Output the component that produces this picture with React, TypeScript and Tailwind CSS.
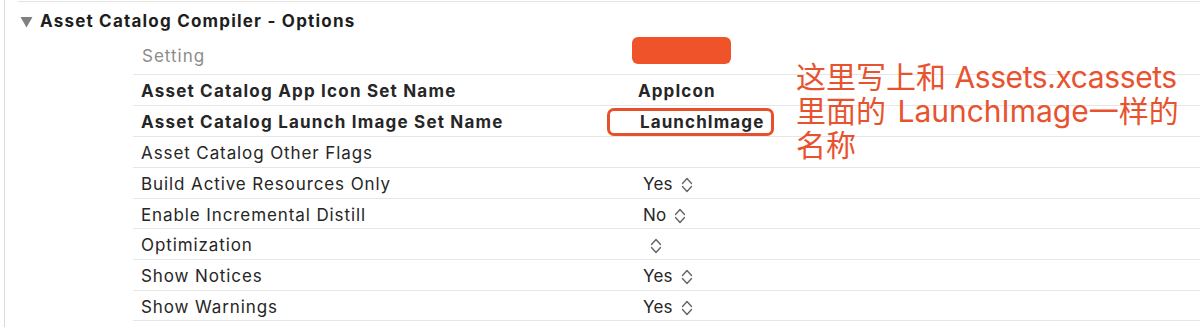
import React from "react";

const Chevrons = () => (
  <svg width="12" height="18" viewBox="0 0 12 18" className="shrink-0">
    <path d="M1.5 7.5 L6 2.5 L10.5 7.5" fill="none" stroke="#666666" strokeWidth="1.4" strokeLinecap="round" strokeLinejoin="round" />
    <path d="M1.5 10.5 L6 15.5 L10.5 10.5" fill="none" stroke="#666666" strokeWidth="1.4" strokeLinecap="round" strokeLinejoin="round" />
  </svg>
);

type Row = { label: string; value?: string; bold?: boolean; chevron?: boolean; h: string; valuePad?: string };

const rows: Row[] = [
  { label: "Asset Catalog App Icon Set Name", value: "AppIcon", bold: true, h: "h-[31px]", valuePad: "pl-[505px]" },
  { label: "Asset Catalog Launch Image Set Name", value: "LaunchImage", bold: true, h: "h-[31px]", valuePad: "pl-[507px]" },
  { label: "Asset Catalog Other Flags", h: "h-[31px]" },
  { label: "Build Active Resources Only", value: "Yes", chevron: true, h: "h-[31px]", valuePad: "pl-[510px]" },
  { label: "Enable Incremental Distill", value: "No", chevron: true, h: "h-[30px]", valuePad: "pl-[510px]" },
  { label: "Optimization", chevron: true, h: "h-[31px]", valuePad: "pl-[517px]" },
  { label: "Show Notices", value: "Yes", chevron: true, h: "h-[31px]", valuePad: "pl-[510px]" },
  { label: "Show Warnings", value: "Yes", chevron: true, h: "h-[30px]", valuePad: "pl-[510px]" },
];

export default function App() {
  return (
    <div
      className="relative w-[1200px] h-[327px] overflow-hidden bg-white flex"
      style={{ fontFamily: "Inter, 'Liberation Sans', 'Noto Sans CJK SC', sans-serif" }}
    >
      <div className="w-[4px] shrink-0" />
      <div className="flex-1 border-l border-[#d9d9d9] flex flex-col">
        <div className="ml-[13px] mt-[1px] border-t border-[#e4e4e4]" />
        {/* Section header */}
        <div className="h-[36px] flex items-center pl-[15px] pt-[3px] gap-[7px]">
          <svg width="13" height="12" viewBox="0 0 13 12">
            <path d="M0.5 1 L12.5 1 L6.5 11.5 Z" fill="#808080" />
          </svg>
          <span className="text-[17px] font-bold text-[#1e1e1e] tracking-[1.2px]">Asset Catalog Compiler - Options</span>
        </div>
        {/* Table */}
        <div className="ml-[128px] flex flex-col">
          <div className="h-[37px] flex items-center pt-[2px] border-b border-[#e6e6e6]">
            <span className="pl-[9px] w-[497px] text-[17px] text-[#8c8c8c] tracking-[1px]">Setting</span>
          </div>
          {rows.map((r) => (
            <div key={r.label} className={`${r.h} flex items-center pt-[4px] border-b border-[#e6e6e6] text-[17px] text-[#262626] relative`}>
              <span className={`pl-[8px] w-[495px] shrink-0 ${r.bold ? "font-bold tracking-[1.2px]" : "tracking-[0.9px]"}`}>{r.label}</span>
              {(r.value || r.chevron) && (
                <div className={`absolute left-0 top-0 h-full pt-[4px] flex items-center gap-[8px] ${r.valuePad}`}>
                  {r.value && (
                    <span className={r.bold ? "font-bold tracking-[1.1px]" : "tracking-[0.2px]"}>{r.value}</span>
                  )}
                  {r.chevron && <Chevrons />}
                </div>
              )}
            </div>
          ))}
        </div>
      </div>

      {/* redaction block */}
      <div className="absolute left-[632px] top-[37px] w-[99px] h-[27px] rounded-[6px] bg-[#ef5329]" />
      {/* highlight box */}
      <div className="absolute left-[607px] top-[108px] w-[167px] h-[28px] rounded-[7px] border-[3px] border-[#e6502a]" />
      {/* annotation */}
      <div
        className="absolute left-[796px] top-[60px] text-[30px] leading-[34px] text-[#e8532f]"
        style={{ fontFamily: "Inter, 'Noto Sans CJK SC', sans-serif" }}
      >
        <div>这里写上和 <span className="tracking-[-0.4px]">Assets.xcassets</span></div>
        <div>里面的 <span className="ml-[3px]">LaunchImage</span>一样的</div>
        <div>名称</div>
      </div>
    </div>
  );
}
